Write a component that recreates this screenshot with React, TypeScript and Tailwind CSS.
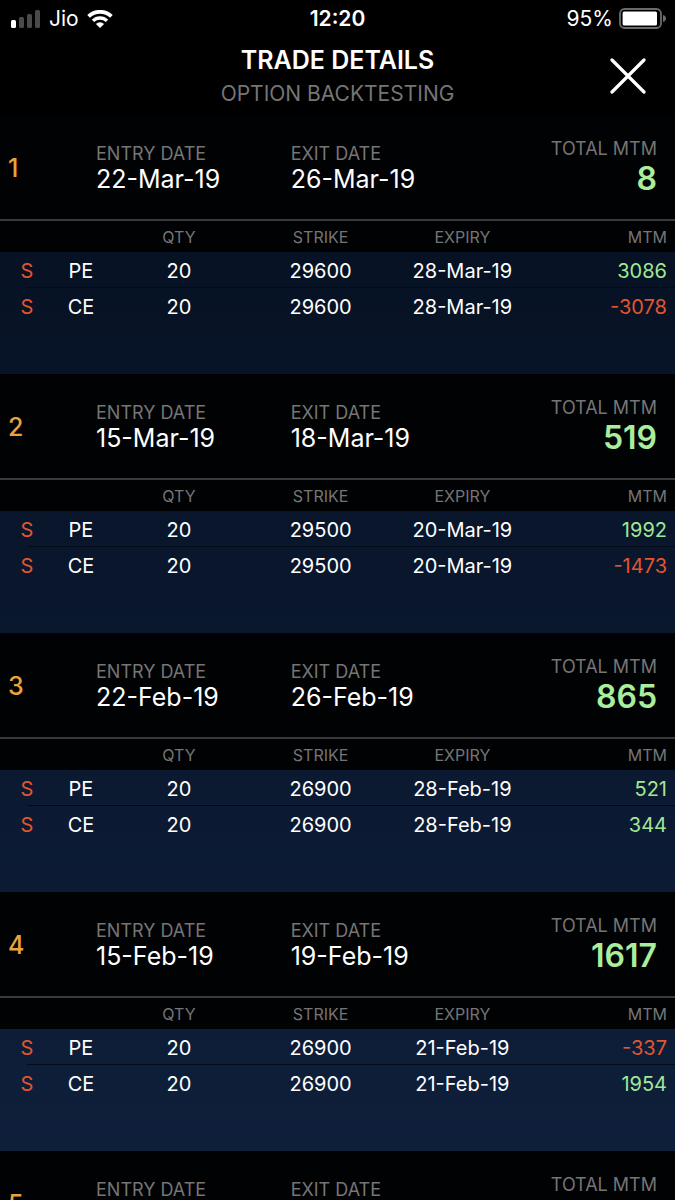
type Leg = { side: string; kind: string; qty: number; strike: number; expiry: string; mtm: number };
type Trade = { entry?: string; exit?: string; total?: number; legs: Leg[] };

const leg = (kind: string, strike: number, expiry: string, mtm: number): Leg => ({
  side: 'S',
  kind,
  qty: 20,
  strike,
  expiry,
  mtm,
});

const trades: Trade[] = [
  {
    entry: '22-Mar-19',
    exit: '26-Mar-19',
    total: 8,
    legs: [leg('PE', 29600, '28-Mar-19', 3086), leg('CE', 29600, '28-Mar-19', -3078)],
  },
  {
    entry: '15-Mar-19',
    exit: '18-Mar-19',
    total: 519,
    legs: [leg('PE', 29500, '20-Mar-19', 1992), leg('CE', 29500, '20-Mar-19', -1473)],
  },
  {
    entry: '22-Feb-19',
    exit: '26-Feb-19',
    total: 865,
    legs: [leg('PE', 26900, '28-Feb-19', 521), leg('CE', 26900, '28-Feb-19', 344)],
  },
  {
    entry: '15-Feb-19',
    exit: '19-Feb-19',
    total: 1617,
    legs: [leg('PE', 26900, '21-Feb-19', -337), leg('CE', 26900, '21-Feb-19', 1954)],
  },
  { legs: [] },
];

function StatusBar() {
  return (
    <div className="grid h-[38px] grid-cols-3 items-center px-2 text-[21px] leading-6 text-white">
      <div className="flex items-center gap-2 pl-[2px]">
        <svg width="31" height="18" viewBox="0 0 31 18" aria-hidden="true">
          <rect x="1" y="10" width="5" height="8" rx="1.5" fill="#fff" />
          <rect x="9" y="7" width="5" height="11" rx="1.5" fill="#4a4a4a" />
          <rect x="17" y="4" width="5" height="14" rx="1.5" fill="#4a4a4a" />
          <rect x="25" y="0" width="5" height="18" rx="1.5" fill="#4a4a4a" />
        </svg>
        <span>Jio</span>
        <svg width="26" height="18" viewBox="0 0 26 18" fill="none" aria-hidden="true">
          <path d="M1.600 6.400a16.400 16.400 0 0 1 22.800 0" stroke="#fff" strokeWidth="3.8" />
          <path d="M6 10.900a10 10 0 0 1 14 0" stroke="#fff" strokeWidth="3.4" />
          <path d="M13 18l-4.100-4.100a5.900 5.900 0 0 1 8.200 0z" fill="#fff" />
        </svg>
      </div>
      <div className="text-center font-semibold">12:20</div>
      <div className="flex items-center justify-end gap-[6px]">
        <span>95%</span>
        <svg width="48" height="22" viewBox="0 0 48 22" fill="none" aria-hidden="true">
          <rect x="1" y="1" width="41" height="19" rx="4.5" stroke="#6b6b6b" strokeWidth="1.8" />
          <rect x="3.6" y="3.6" width="34.4" height="13.8" rx="1.5" fill="#fff" />
          <path d="M44 7c2 .6 3 1.900 3 3.500s-1 2.900-3 3.500z" fill="#6b6b6b" />
        </svg>
      </div>
    </div>
  );
}

function Field({ label, value }: { label: string; value?: string }) {
  return (
    <div className="pt-[29px]">
      <div className="text-[18px] leading-5 text-[#757575]">{label}</div>
      <div className="text-[25px] leading-[30px] text-white">{value}</div>
    </div>
  );
}

function TradeSection({ trade, index }: { trade: Trade; index: number }) {
  return (
    <section>
      <div className="grid h-[106px] grid-cols-[88px_30%_1fr_auto] border-b-2 border-[#3a3a3c] bg-[#010204] pl-2 pr-[18px]">
        <div className="flex items-center pt-[2px] text-[25px] font-medium leading-8 text-[#e8a33d]">{index}</div>
        <Field label="ENTRY DATE" value={trade.entry} />
        <Field label="EXIT DATE" value={trade.exit} />
        <div className="pt-6 text-right">
          <div className="text-[18px] leading-5 text-[#757575]">TOTAL MTM</div>
          <div className="text-[32px] font-semibold leading-10 text-[#a9ee9c]">{trade.total}</div>
        </div>
      </div>
      {trade.legs.length > 0 && (
        <div className="pb-[50px]">
          <table className="w-full table-fixed border-separate border-spacing-0 text-center">
            <colgroup>
              <col className="w-[8%]" />
              <col className="w-[8%]" />
              <col className="w-[21%]" />
              <col className="w-[21%]" />
              <col className="w-[21%]" />
              <col className="w-[21%]" />
            </colgroup>
            <thead className="bg-[#010204] text-[16px] text-[#757575]">
              <tr className="h-[31px]">
                <td className="p-0" colSpan={2} />
                <th className="p-0 font-normal">QTY</th>
                <th className="p-0 font-normal">STRIKE</th>
                <th className="p-0 font-normal">EXPIRY</th>
                <th className="py-0 pl-0 pr-2 text-right font-normal">MTM</th>
              </tr>
            </thead>
            <tbody className="text-[20px] leading-6 text-white">
              {trade.legs.map((l) => (
                <tr key={l.kind} className="group h-9">
                  <td className="bg-[length:50%_1px] bg-right-bottom bg-no-repeat px-0 pt-[2px] pb-0 text-[#e2552f] group-first:bg-[linear-gradient(#030a18,#030a18)]">
                    {l.side}
                  </td>
                  <td className="border-[#030a18] px-0 pt-[2px] pb-0 group-first:border-b">{l.kind}</td>
                  <td className="border-[#030a18] px-0 pt-[2px] pb-0 group-first:border-b">{l.qty}</td>
                  <td className="border-[#030a18] px-0 pt-[2px] pb-0 group-first:border-b">{l.strike}</td>
                  <td className="border-[#030a18] px-0 pt-[2px] pb-0 group-first:border-b">{l.expiry}</td>
                  <td
                    className={
                      'border-[#030a18] pt-[2px] pr-2 pb-0 pl-0 text-right group-first:border-b ' +
                      (l.mtm < 0 ? 'text-[#e2552f]' : 'text-[#a0e896]')
                    }
                  >
                    {l.mtm}
                  </td>
                </tr>
              ))}
            </tbody>
          </table>
        </div>
      )}
    </section>
  );
}

export default function App() {
  return (
    <div className="flex h-screen flex-col overflow-hidden bg-linear-to-b from-[#050e1e] to-[#0f203c] font-['Inter','Liberation_Sans',sans-serif]">
      <header className="bg-black pb-[3px]">
        <StatusBar />
        <div className="grid grid-cols-[64px_1fr_64px] items-start px-[15px] pt-[6px]">
          <div />
          <div className="text-center">
            <h1 className="text-[25px] font-semibold leading-8 text-white">TRADE DETAILS</h1>
            <p className="text-[21px] leading-9 text-[#757575]">OPTION BACKTESTING</p>
          </div>
          <button type="button" aria-label="Close" className="flex h-16 items-center justify-center">
            <svg width="36" height="36" viewBox="0 0 36 36" aria-hidden="true">
              <path d="M2 2l32 32M34 2L2 34" stroke="#fff" strokeWidth="3.2" strokeLinecap="round" />
            </svg>
          </button>
        </div>
      </header>
      <main className="min-h-0 flex-1 overflow-y-auto [scrollbar-width:none]">
        {trades.map((t, i) => (
          <TradeSection key={i} trade={t} index={i + 1} />
        ))}
      </main>
    </div>
  );
}
